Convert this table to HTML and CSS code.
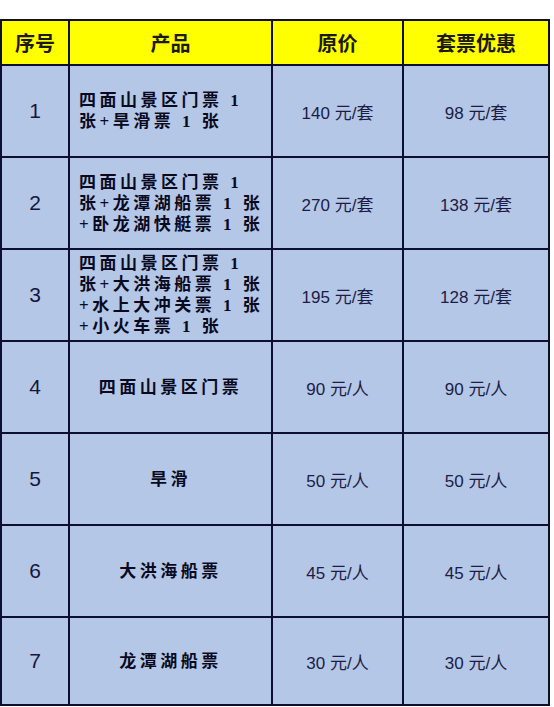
FILE: index.html
```html
<!DOCTYPE html>
<html lang="zh">
<head>
<meta charset="utf-8">
<link rel="stylesheet" href="styles.css">
</head>
<body>
<div class="table">
  <div class="cell head">序号</div>
  <div class="cell head">产品</div>
  <div class="cell head">原价</div>
  <div class="cell head">套票优惠</div>

  <div class="cell num">1</div>
  <div class="cell prod multi">四面山景区门票 1<br>张+旱滑票 1 张</div>
  <div class="cell price">140 元/套</div>
  <div class="cell price">98 元/套</div>

  <div class="cell num">2</div>
  <div class="cell prod multi">四面山景区门票 1<br>张+龙潭湖船票 1 张<br>+卧龙湖快艇票 1 张</div>
  <div class="cell price">270 元/套</div>
  <div class="cell price">138 元/套</div>

  <div class="cell num">3</div>
  <div class="cell prod multi">四面山景区门票 1<br>张+大洪海船票 1 张<br>+水上大冲关票 1 张<br>+小火车票 1 张</div>
  <div class="cell price">195 元/套</div>
  <div class="cell price">128 元/套</div>

  <div class="cell num">4</div>
  <div class="cell prod">四面山景区门票</div>
  <div class="cell price">90 元/人</div>
  <div class="cell price">90 元/人</div>

  <div class="cell num">5</div>
  <div class="cell prod">旱滑</div>
  <div class="cell price">50 元/人</div>
  <div class="cell price">50 元/人</div>

  <div class="cell num">6</div>
  <div class="cell prod">大洪海船票</div>
  <div class="cell price">45 元/人</div>
  <div class="cell price">45 元/人</div>

  <div class="cell num">7</div>
  <div class="cell prod">龙潭湖船票</div>
  <div class="cell price">30 元/人</div>
  <div class="cell price">30 元/人</div>
</div>
</body>
</html>
```

FILE: styles.css
```css
html, body {
  margin: 0;
  padding: 0;
  background: #ffffff;
}

body {
  padding-top: 19px;
}

.table {
  display: grid;
  grid-template-columns: 66px 201px 129px 144px;
  grid-template-rows: 43px repeat(6, 90px) 86px;
  gap: 2px;
  padding: 2px;
  width: 546px;
  background: #0e0e30;
}

.cell {
  display: flex;
  align-items: center;
  justify-content: center;
  background: #b4c7e7;
  color: #12122e;
  text-align: center;
}

.head {
  background: #ffff00;
  font-family: "Noto Sans CJK SC", sans-serif;
  font-weight: 700;
  font-size: 20px;
  color: #1a1a10;
}

.num {
  font-family: "Liberation Sans", "Noto Sans CJK SC", sans-serif;
  font-size: 21px;
  color: #16163a;
}

.prod {
  font-family: "Liberation Serif", "Noto Sans CJK SC", serif;
  font-weight: 700;
  font-size: 17px;
  letter-spacing: 3.5px;
  line-height: 21px;
  color: #0a0a1e;
}

.prod.multi {
  justify-content: flex-start;
  text-align: left;
  padding-left: 9px;
}

.price {
  font-family: "Liberation Sans", "Noto Sans CJK SC", sans-serif;
  font-size: 17px;
  color: #1c1c44;
}
```
